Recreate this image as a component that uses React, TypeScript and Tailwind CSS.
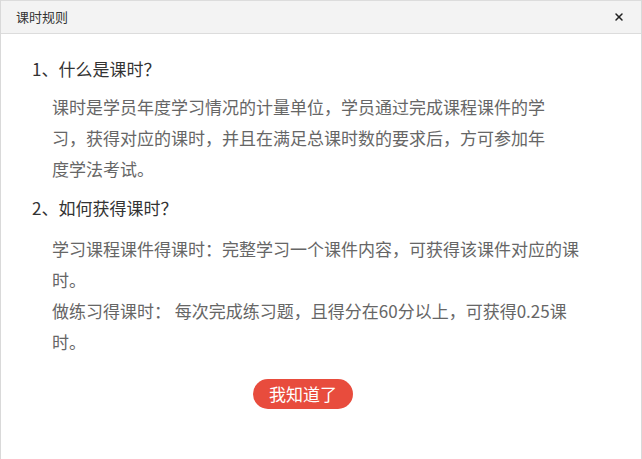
import { X } from 'lucide-react';

const font = { fontFamily: '"Noto Sans CJK SC", "Noto Sans", sans-serif' };

export default function App() {
  return (
    <div className="w-[642px] h-[459px] bg-white border-x border-[#d9d9d9] flex flex-col" style={font}>
      {/* Header */}
      <div className="h-[34px] shrink-0 bg-[#f3f3f3] border-y border-[#dcdcdc] flex items-center justify-between pl-[15px] pr-[16px]">
        <span className="text-[13px] text-[#333]">课时规则</span>
        <X className="w-[12px] h-[12px] text-[#222]" strokeWidth={3} />
      </div>

      {/* Body */}
      <div className="pt-[19px] pl-[31px] pr-[20px] text-[17px] leading-[31px]">
        <h2 className="text-[#333]">1、什么是课时？</h2>
        <p className="mt-[7px] pl-[20px] text-[#666]">
          课时是学员年度学习情况的计量单位，学员通过完成课程课件的学
          <br />
          习，获得对应的课时，并且在满足总课时数的要求后，方可参加年
          <br />
          度学法考试。
        </p>

        <h2 className="mt-[8px] text-[#333]">2、如何获得课时？</h2>
        <p className="mt-[10px] pl-[20px] text-[#666]">
          学习课程课件得课时：完整学习一个课件内容，可获得该课件对应的课
          <br />
          时。
          <br />
          做练习得课时： 每次完成练习题，且得分在60分以上，可获得0.25课
          <br />
          时。
        </p>

        <div className="mt-[21px] pl-[221px]">
          <button className="w-[100px] h-[30px] rounded-full bg-[#e84c3d] text-white text-[17px] leading-[30px]">
            我知道了
          </button>
        </div>
      </div>
    </div>
  );
}
